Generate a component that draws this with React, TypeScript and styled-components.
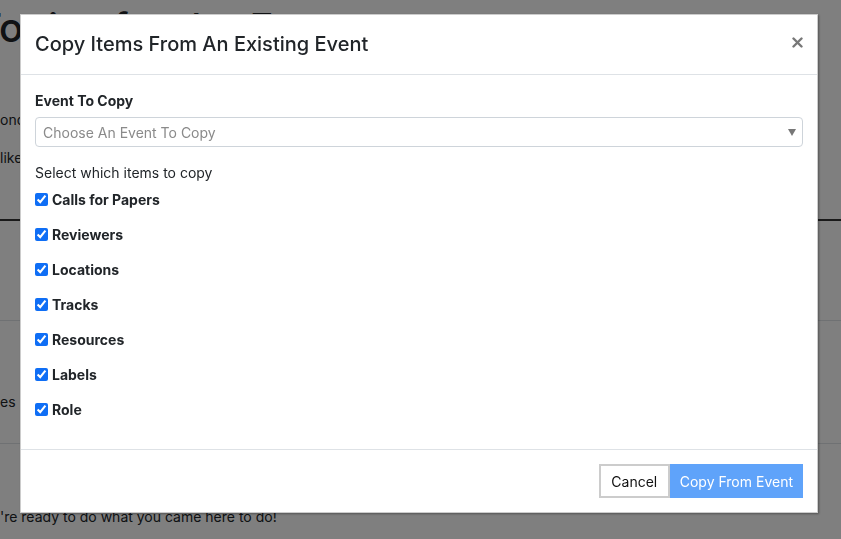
import React, { useState } from 'react';
import styled, { createGlobalStyle } from 'styled-components';

const GlobalStyle = createGlobalStyle`
  html, body {
    margin: 0;
    padding: 0;
    background: #fff;
    font-family: Inter, "Liberation Sans", Arial, sans-serif;
    color: #212529;
    overflow: hidden;
  }
  * {
    box-sizing: border-box;
  }
`;

const Page = styled.div`
  width: 841px;
  height: 539px;
  overflow: hidden;
  display: flex;
  flex-direction: column;
`;

const Intro = styled.div`
  height: 219px;
  display: flex;
  flex-direction: column;
`;

const PageHeading = styled.h1`
  margin: 0 0 0 -24px;
  padding-top: 4px;
  height: 108px;
  font-size: 40px;
  font-weight: 500;
  line-height: 48px;
  white-space: nowrap;
`;

const PageText = styled.p`
  margin: 0 0 14px;
  font-size: 14px;
  line-height: 24px;
  white-space: nowrap;
`;

const Section = styled.div<{ $height: number; $strong?: boolean; $top?: number }>`
  height: ${p => p.$height}px;
  padding-top: ${p => p.$top ?? 0}px;
  border-top: ${p => (p.$strong ? '2px solid #333' : '1px solid #dee2e6')};
  display: flex;
  flex-direction: column;
`;

const Backdrop = styled.div`
  position: fixed;
  inset: 0;
  background: rgba(0, 0, 0, 0.5);
`;

const Modal = styled.div`
  position: fixed;
  top: 14px;
  left: 20px;
  width: 798px;
  background: #fff;
  border: 1px solid rgba(0, 0, 0, 0.2);
  box-shadow: 1px 1px 2px rgba(0, 0, 0, 0.35);
  display: flex;
  flex-direction: column;
`;

const ModalHeader = styled.div`
  display: flex;
  align-items: center;
  justify-content: space-between;
  padding: 14px 12px 15px 14px;
  border-bottom: 1px solid #dee2e6;
`;

const ModalTitle = styled.h5`
  margin: 0;
  font-size: 20px;
  font-weight: 500;
  line-height: 30px;
  color: #212529;
`;

const CloseButton = styled.button`
  border: none;
  background: transparent;
  padding: 0;
  width: 16px;
  height: 16px;
  display: flex;
  align-items: center;
  justify-content: center;
  cursor: pointer;
  margin-top: -4px;
`;

const ModalBody = styled.div`
  padding: 15px 14px 15px 14px;
  display: flex;
  flex-direction: column;
`;

const FieldLabel = styled.label`
  font-size: 14px;
  font-weight: 700;
  line-height: 21px;
  margin-bottom: 6px;
`;

const SelectBox = styled.div`
  height: 30px;
  border: 1px solid #ced4da;
  border-radius: 4px;
  display: flex;
  align-items: center;
  justify-content: space-between;
  padding: 0 6px 0 7px;
  font-size: 14px;
  color: #8a8a8a;
  margin-bottom: 15px;
`;

const Caret = styled.span`
  width: 0;
  height: 0;
  border-left: 4px solid transparent;
  border-right: 4px solid transparent;
  border-top: 7px solid #777;
`;

const Hint = styled.div`
  font-size: 14px;
  line-height: 21px;
  margin-bottom: 6px;
`;

const CheckRow = styled.label`
  display: flex;
  align-items: center;
  gap: 4px;
  font-size: 14px;
  font-weight: 700;
  line-height: 21px;
  margin-bottom: 14px;
  cursor: pointer;
`;

const Check = styled.input`
  width: 13px;
  height: 13px;
  margin: 0;
  accent-color: #0f6ef5;
`;

const ModalFooter = styled.div`
  display: flex;
  justify-content: flex-end;
  padding: 14px 14px 14px 14px;
  border-top: 1px solid #dee2e6;
`;

const Button = styled.button<{ $primary?: boolean }>`
  height: 34px;
  font-family: inherit;
  font-size: 14px;
  padding: ${p => (p.$primary ? '0 10px' : '0 10.5px')};
  cursor: pointer;
  border: ${p => (p.$primary ? 'none' : '2px solid #cccccc')};
  background: ${p => (p.$primary ? '#5fa3fa' : '#fff')};
  color: ${p => (p.$primary ? '#fff' : '#111')};
`;

const items = ['Calls for Papers', 'Reviewers', 'Locations', 'Tracks', 'Resources', 'Labels', 'Role'];

export default function App() {
  const [checked, setChecked] = useState<boolean[]>(items.map(() => true));

  return (
    <>
      <GlobalStyle />
      <Page>
        <Intro>
          <PageHeading>Topics for the Event</PageHeading>
          <PageText>ond</PageText>
          <PageText>like</PageText>
        </Intro>
        <Section $height={101} $strong />
        <Section $height={123} $top={69}>
          <PageText>es</PageText>
        </Section>
        <Section $height={96} $top={61}>
          <PageText>'re ready to do what you came here to do!</PageText>
        </Section>
      </Page>
      <Backdrop />
      <Modal>
        <ModalHeader>
          <ModalTitle>Copy Items From An Existing Event</ModalTitle>
          <CloseButton aria-label="Close">
            <svg width="11" height="11" viewBox="0 0 11 11">
              <path d="M1.5 1.5 L9.5 9.5 M9.5 1.5 L1.5 9.5" stroke="#777" strokeWidth="2.4" strokeLinecap="round" />
            </svg>
          </CloseButton>
        </ModalHeader>
        <ModalBody>
          <FieldLabel>Event To Copy</FieldLabel>
          <SelectBox>
            <span>Choose An Event To Copy</span>
            <Caret />
          </SelectBox>
          <Hint>Select which items to copy</Hint>
          {items.map((item, i) => (
            <CheckRow key={item}>
              <Check
                type="checkbox"
                checked={checked[i]}
                onChange={() => setChecked(c => c.map((v, j) => (j === i ? !v : v)))}
              />
              {item}
            </CheckRow>
          ))}
        </ModalBody>
        <ModalFooter>
          <Button>Cancel</Button>
          <Button $primary>Copy From Event</Button>
        </ModalFooter>
      </Modal>
    </>
  );
}
